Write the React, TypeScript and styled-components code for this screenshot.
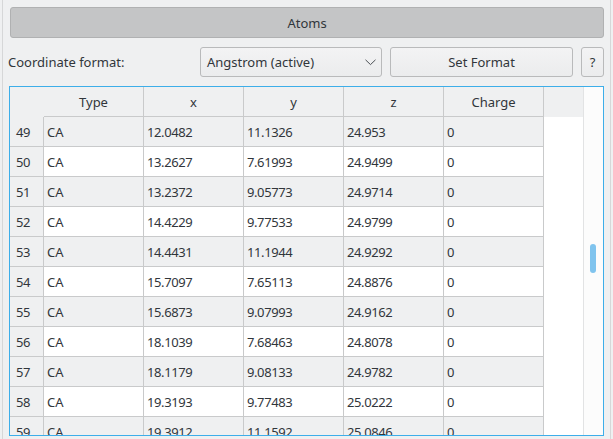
import React from "react";
import styled, { createGlobalStyle } from "styled-components";

const GlobalStyle = createGlobalStyle`
  html, body {
    margin: 0;
    padding: 0;
    background: #eff0f1;
  }
  body {
    font-family: "Noto Sans", "DejaVu Sans", sans-serif;
    font-size: 13px;
    color: #31363b;
  }
  * { box-sizing: border-box; }
`;

const Page = styled.div`
  width: 613px;
  height: 439px;
  overflow: hidden;
  padding-left: 2px;
  background: #eff0f1;
`;

const Panel = styled.div`
  width: 609px;
  height: 439px;
  border-left: 1px solid #d6d7d8;
  border-right: 1px solid #d6d7d8;
  padding-top: 7px;
  display: flex;
  flex-direction: column;
`;

const TitleButton = styled.div`
  height: 31px;
  margin: 0 6px 0 7px;
  background: #c4c5c6;
  border: 1px solid #b0b1b2;
  border-radius: 3px;
  display: flex;
  align-items: center;
  justify-content: center;
`;

const FormatRow = styled.div`
  height: 30px;
  margin: 9px 6px 0 5px;
  display: flex;
  align-items: center;
  gap: 8px;
`;

const Label = styled.div`
  flex: 1;
  white-space: nowrap;
`;

const Combo = styled.div`
  width: 182px;
  height: 30px;
  border: 1px solid #b9babb;
  border-radius: 3px;
  background: linear-gradient(#f3f3f4, #ebeced);
  display: flex;
  align-items: center;
  padding: 0 5px 0 6px;
  justify-content: space-between;
`;

const PushButton = styled.div<{ $w: number }>`
  width: ${(p) => p.$w}px;
  height: 30px;
  border: 1px solid #b9babb;
  border-radius: 3px;
  background: linear-gradient(#f3f3f4, #ebeced);
  display: flex;
  align-items: center;
  justify-content: center;
`;

const Frame = styled.div`
  height: 350px;
  margin: 9px 6px 0 6px;
  border: 1px solid #3daee9;
  display: flex;
  overflow: hidden;
`;

const Viewport = styled.div`
  flex: 1;
  background: #ffffff;
  display: flex;
  flex-direction: column;
  overflow: hidden;
`;

const HeaderRow = styled.div`
  height: 30px;
  flex: none;
  display: flex;
  background: #eff0f1;
`;

const Corner = styled.div`
  width: 34px;
  flex: none;
`;

const HeaderCell = styled.div`
  width: 100px;
  flex: none;
  border-right: 1px solid #c9cacb;
  border-bottom: 1px solid #c9cacb;
  display: flex;
  align-items: center;
  justify-content: center;
  padding-top: 1px;
`;

const Row = styled.div`
  height: 30px;
  flex: none;
  display: flex;
`;

const RowNumber = styled.div`
  width: 34px;
  flex: none;
  background: #eff0f1;
  border-right: 1px solid #c9cacb;
  border-bottom: 1px solid #c9cacb;
  display: flex;
  align-items: center;
  padding-left: 6px;
  letter-spacing: -0.4px;
`;

const Cell = styled.div<{ $alt: boolean; $num?: boolean }>`
  width: 100px;
  flex: none;
  background: ${(p) => (p.$alt ? "#eff0f1" : "#ffffff")};
  border-right: 1px solid #c9cacb;
  border-bottom: 1px solid #c9cacb;
  display: flex;
  align-items: center;
  padding-left: 3px;
  letter-spacing: ${(p) => (p.$num ? "-0.4px" : "0")};
  white-space: nowrap;
`;

const ScrollTrack = styled.div`
  width: 20px;
  flex: none;
  background: #fcfcfc;
  border-left: 1px solid #e2e3e4;
  position: relative;
`;

const ScrollHandle = styled.div`
  position: absolute;
  left: 6px;
  top: 157px;
  width: 6px;
  height: 29px;
  border-radius: 3px;
  background: #80c4ee;
`;

const rows: [number, string, string, string, string, string][] = [
  [49, "CA", "12.0482", "11.1326", "24.953", "0"],
  [50, "CA", "13.2627", "7.61993", "24.9499", "0"],
  [51, "CA", "13.2372", "9.05773", "24.9714", "0"],
  [52, "CA", "14.4229", "9.77533", "24.9799", "0"],
  [53, "CA", "14.4431", "11.1944", "24.9292", "0"],
  [54, "CA", "15.7097", "7.65113", "24.8876", "0"],
  [55, "CA", "15.6873", "9.07993", "24.9162", "0"],
  [56, "CA", "18.1039", "7.68463", "24.8078", "0"],
  [57, "CA", "18.1179", "9.08133", "24.9782", "0"],
  [58, "CA", "19.3193", "9.77483", "25.0222", "0"],
  [59, "CA", "19.3912", "11.1592", "25.0846", "0"],
];

const headers = ["Type", "x", "y", "z", "Charge"];

export default function App() {
  return (
    <>
      <GlobalStyle />
      <Page>
        <Panel>
          <TitleButton>Atoms</TitleButton>
          <FormatRow>
            <Label>Coordinate format:</Label>
            <Combo>
              <span>Angstrom (active)</span>
              <svg width="11" height="7" viewBox="0 0 11 7">
                <polyline
                  points="0.5,0.8 5.5,5.6 10.5,0.8"
                  fill="none"
                  stroke="#4a4f54"
                  strokeWidth="1"
                />
              </svg>
            </Combo>
            <PushButton $w={183}>Set Format</PushButton>
            <PushButton $w={23}>?</PushButton>
          </FormatRow>
          <Frame>
            <Viewport>
              <HeaderRow>
                <Corner />
                {headers.map((h) => (
                  <HeaderCell key={h}>{h}</HeaderCell>
                ))}
              </HeaderRow>
              {rows.map((r, i) => {
                const alt = i % 2 === 0;
                return (
                  <Row key={r[0]}>
                    <RowNumber>{r[0]}</RowNumber>
                    <Cell $alt={alt}>{r[1]}</Cell>
                    <Cell $alt={alt} $num>{r[2]}</Cell>
                    <Cell $alt={alt} $num>{r[3]}</Cell>
                    <Cell $alt={alt} $num>{r[4]}</Cell>
                    <Cell $alt={alt} $num>{r[5]}</Cell>
                  </Row>
                );
              })}
            </Viewport>
            <ScrollTrack>
              <ScrollHandle />
            </ScrollTrack>
          </Frame>
        </Panel>
      </Page>
    </>
  );
}
